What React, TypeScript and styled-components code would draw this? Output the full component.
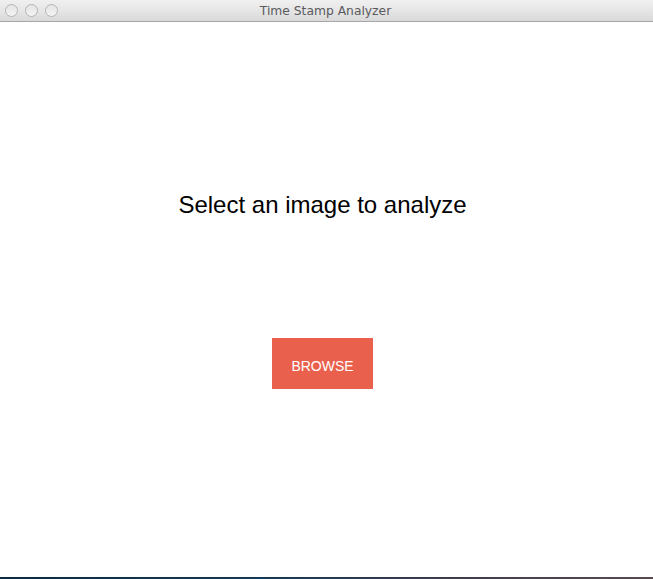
import React from 'react'
import styled, { createGlobalStyle } from 'styled-components'

const GlobalStyle = createGlobalStyle`
  html, body {
    margin: 0;
    padding: 0;
    background: #ffffff;
  }
  #root {
    width: 653px;
    height: 579px;
  }
`

const Window = styled.div`
  width: 653px;
  height: 579px;
  display: flex;
  flex-direction: column;
  background: #ffffff;
  overflow: hidden;
`

const TitleBar = styled.div`
  position: relative;
  height: 21px;
  flex-shrink: 0;
  display: flex;
  align-items: center;
  justify-content: center;
  background: linear-gradient(to bottom, #f0f0f0 0%, #e6e6e6 50%, #d9d9d9 100%);
  border-bottom: 1px solid #a6a6a6;
`

const Lights = styled.div`
  position: absolute;
  left: 5px;
  top: 4px;
  display: flex;
  gap: 7px;
`

const Light = styled.span`
  width: 11px;
  height: 11px;
  border-radius: 50%;
  border: 1px solid #b4b4b4;
  background: linear-gradient(to bottom, #e4e4e4, #f4f4f4);
`

const Title = styled.span`
  font-family: 'DejaVu Sans', 'Liberation Sans', sans-serif;
  font-size: 12.3px;
  color: #5a5a5e;
  margin-left: -2px;
`

const Content = styled.main`
  flex: 1;
  display: flex;
  flex-direction: column;
  align-items: center;
  padding: 169px 8px 0 0;
  gap: 119px;
`

const Prompt = styled.h1`
  margin: 0;
  font-family: 'Liberation Sans', Arial, sans-serif;
  font-weight: normal;
  font-size: 24px;
  line-height: 28px;
  color: #000000;
`

const BrowseButton = styled.button`
  width: 101px;
  height: 51px;
  border: none;
  background: #e9604c;
  color: #ffffff;
  font-family: 'Liberation Sans', Arial, sans-serif;
  font-size: 14px;
  padding: 4px 0 0;
  cursor: pointer;
`

const Desktop = styled.div`
  height: 2px;
  flex-shrink: 0;
  background: linear-gradient(to right, #0a2a44 0%, #123a5a 40%, #3a3a4e 65%, #5a4a50 100%);
`

export default function App() {
  return (
    <>
      <GlobalStyle />
      <Window>
        <TitleBar>
          <Lights>
            <Light />
            <Light />
            <Light />
          </Lights>
          <Title>Time Stamp Analyzer</Title>
        </TitleBar>
        <Content>
          <Prompt>Select an image to analyze</Prompt>
          <BrowseButton>BROWSE</BrowseButton>
        </Content>
        <Desktop />
      </Window>
    </>
  )
}
